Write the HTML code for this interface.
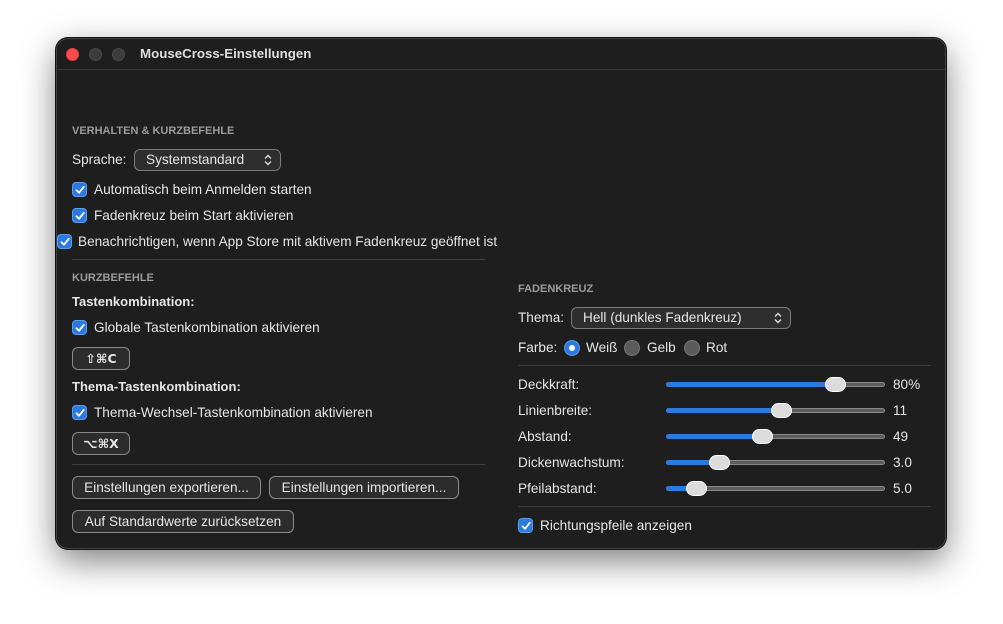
<!DOCTYPE html>
<html><head><meta charset="utf-8"><style>
*{box-sizing:border-box;margin:0;padding:0}
body{width:1003px;height:624px;background:#fff;position:relative;overflow:hidden;font-family:"Liberation Sans",sans-serif;font-size:13.6px;color:#e6e6e6}
.win{position:absolute;left:56px;top:38px;width:890px;height:511px;background:#1e1e1e;border-radius:12px;border:1px solid #444;box-shadow:0 0 0 1px #111,0 12px 34px rgba(0,0,0,.5)}
.a{position:absolute;line-height:16px;white-space:nowrap}
.h{font-size:11px;font-weight:bold;color:#9b9b9b}
.b{font-weight:bold}
.sep{position:absolute;height:1px;background:#3e3e3e}
.cb{position:absolute;width:15px;height:15px;border-radius:4px;background:#2b7ae0;border:1px solid #5a9cf0}
.cb svg{position:absolute;left:1px;top:1px}
.btn{position:absolute;height:23px;border:1px solid #8a8a8a;border-radius:6px;background:#2c2c2c;line-height:21px;text-align:center;color:#e6e6e6}
.pop{position:absolute;height:22px;border:1px solid #7a7a7a;border-radius:6px;background:#2e2e2e;line-height:20px;padding-left:11px}
.pop .ar{position:absolute;right:8px;top:4px}
.dot{position:absolute;top:12px;width:12px;height:12px;border-radius:50%}
.rad{position:absolute;width:16px;height:16px;border-radius:50%;background:#5a5a5a;border:1px solid #777}
.track{position:absolute;left:666px;width:219px;height:5px;border-radius:3px;background:#5c5c5c;border:1px solid #888}
.fill{position:absolute;left:666px;height:5px;border-radius:3px;background:#2b7ae0}
.th{position:absolute;width:21px;height:15px;border-radius:8px;background:#dcdcdc;border:1px solid #fff}
</style></head><body>
<div class="win">
<div class="dot" style="left:9px;background:#fe4b49;border:1px solid #e0443f;width:13px;height:13px;top:9px"></div>
<div class="dot" style="left:32px;background:#3c3c3c;border:1px solid #4a4a4a;width:13px;height:13px;top:9px"></div>
<div class="dot" style="left:55px;background:#3c3c3c;border:1px solid #4a4a4a;width:13px;height:13px;top:9px"></div>
</div>
<div class="a b" style="left:140px;top:46px;color:#dedede;font-size:13.3px">MouseCross-Einstellungen</div>
<div class="sep" style="left:57px;top:69px;width:888px;background:#383838"></div>

<div class="a h" style="left:72px;top:123px">VERHALTEN &amp; KURZBEFEHLE</div>
<div class="a" style="left:72px;top:152px">Sprache:</div>
<div class="pop" style="left:134px;top:149px;width:147px">Systemstandard<svg class="ar" width="8" height="12" viewBox="0 0 8 12"><path d="M1 4.5L4 1.5L7 4.5M1 7.5L4 10.5L7 7.5" stroke="#ddd" stroke-width="1.4" fill="none"/></svg></div>

<div class="cb" style="left:72px;top:182px"><svg width="12" height="12" viewBox="0 0 12 12"><path d="M2.5 6.3L5 8.8L9.8 2.8" stroke="#fff" stroke-width="1.8" fill="none" stroke-linecap="round" stroke-linejoin="round"/></svg></div>
<div class="a" style="left:94px;top:182px">Automatisch beim Anmelden starten</div>
<div class="cb" style="left:72px;top:208px"><svg width="12" height="12" viewBox="0 0 12 12"><path d="M2.5 6.3L5 8.8L9.8 2.8" stroke="#fff" stroke-width="1.8" fill="none" stroke-linecap="round" stroke-linejoin="round"/></svg></div>
<div class="a" style="left:94px;top:208px">Fadenkreuz beim Start aktivieren</div>
<div class="cb" style="left:57px;top:234px"><svg width="12" height="12" viewBox="0 0 12 12"><path d="M2.5 6.3L5 8.8L9.8 2.8" stroke="#fff" stroke-width="1.8" fill="none" stroke-linecap="round" stroke-linejoin="round"/></svg></div>
<div class="a" style="left:78px;top:234px">Benachrichtigen, wenn App Store mit aktivem Fadenkreuz geöffnet ist</div>
<div class="sep" style="left:72px;top:259px;width:413px"></div>

<div class="a h" style="left:72px;top:270px">KURZBEFEHLE</div>
<div class="a b" style="left:72px;top:294px;font-size:13px">Tastenkombination:</div>
<div class="cb" style="left:72px;top:320px"><svg width="12" height="12" viewBox="0 0 12 12"><path d="M2.5 6.3L5 8.8L9.8 2.8" stroke="#fff" stroke-width="1.8" fill="none" stroke-linecap="round" stroke-linejoin="round"/></svg></div>
<div class="a" style="left:94px;top:320px">Globale Tastenkombination aktivieren</div>
<div class="btn" style="left:72px;top:347px;width:58px;font-family:'DejaVu Sans',sans-serif;font-size:12.5px;font-weight:bold">⇧⌘C</div>
<div class="a b" style="left:72px;top:379px;font-size:13px">Thema-Tastenkombination:</div>
<div class="cb" style="left:72px;top:405px"><svg width="12" height="12" viewBox="0 0 12 12"><path d="M2.5 6.3L5 8.8L9.8 2.8" stroke="#fff" stroke-width="1.8" fill="none" stroke-linecap="round" stroke-linejoin="round"/></svg></div>
<div class="a" style="left:94px;top:405px">Thema-Wechsel-Tastenkombination aktivieren</div>
<div class="btn" style="left:72px;top:432px;width:58px;font-family:'DejaVu Sans',sans-serif;font-size:12.5px;font-weight:bold">⌥⌘X</div>
<div class="sep" style="left:72px;top:464px;width:413px"></div>
<div class="btn" style="left:72px;top:476px;width:189px">Einstellungen exportieren...</div>
<div class="btn" style="left:269px;top:476px;width:190px">Einstellungen importieren...</div>
<div class="btn" style="left:72px;top:510px;width:222px">Auf Standardwerte zurücksetzen</div>

<div class="a h" style="left:518px;top:281px">FADENKREUZ</div>
<div class="a" style="left:518px;top:310px">Thema:</div>
<div class="pop" style="left:571px;top:307px;width:220px">Hell (dunkles Fadenkreuz)<svg class="ar" width="8" height="12" viewBox="0 0 8 12"><path d="M1 4.5L4 1.5L7 4.5M1 7.5L4 10.5L7 7.5" stroke="#ddd" stroke-width="1.4" fill="none"/></svg></div>
<div class="a" style="left:518px;top:340px">Farbe:</div>
<div class="rad" style="left:564px;top:340px;background:#2b7ae0;border-color:#5a9cf0"><div style="position:absolute;left:4px;top:4px;width:6px;height:6px;border-radius:50%;background:#fff"></div></div>
<div class="a" style="left:586px;top:340px">Weiß</div>
<div class="rad" style="left:624px;top:340px"></div>
<div class="a" style="left:647px;top:340px">Gelb</div>
<div class="rad" style="left:684px;top:340px"></div>
<div class="a" style="left:706px;top:340px">Rot</div>
<div class="sep" style="left:518px;top:365px;width:413px"></div>

<div class="a" style="left:518px;top:377px">Deckkraft:</div>
<div class="track" style="top:382px"></div><div class="fill" style="top:382px;width:170px"></div><div class="th" style="left:825px;top:377px"></div>
<div class="a" style="left:893px;top:377px">80%</div>
<div class="a" style="left:518px;top:403px">Linienbreite:</div>
<div class="track" style="top:408px"></div><div class="fill" style="top:408px;width:115px"></div><div class="th" style="left:771px;top:403px"></div>
<div class="a" style="left:893px;top:403px">11</div>
<div class="a" style="left:518px;top:429px">Abstand:</div>
<div class="track" style="top:434px"></div><div class="fill" style="top:434px;width:96px"></div><div class="th" style="left:752px;top:429px"></div>
<div class="a" style="left:893px;top:429px">49</div>
<div class="a" style="left:518px;top:455px">Dickenwachstum:</div>
<div class="track" style="top:460px"></div><div class="fill" style="top:460px;width:53px"></div><div class="th" style="left:709px;top:455px"></div>
<div class="a" style="left:893px;top:455px">3.0</div>
<div class="a" style="left:518px;top:481px">Pfeilabstand:</div>
<div class="track" style="top:486px"></div><div class="fill" style="top:486px;width:30px"></div><div class="th" style="left:686px;top:481px"></div>
<div class="a" style="left:893px;top:481px">5.0</div>
<div class="sep" style="left:518px;top:506px;width:413px"></div>
<div class="cb" style="left:518px;top:518px"><svg width="12" height="12" viewBox="0 0 12 12"><path d="M2.5 6.3L5 8.8L9.8 2.8" stroke="#fff" stroke-width="1.8" fill="none" stroke-linecap="round" stroke-linejoin="round"/></svg></div>
<div class="a" style="left:540px;top:518px">Richtungspfeile anzeigen</div>
</body></html>
